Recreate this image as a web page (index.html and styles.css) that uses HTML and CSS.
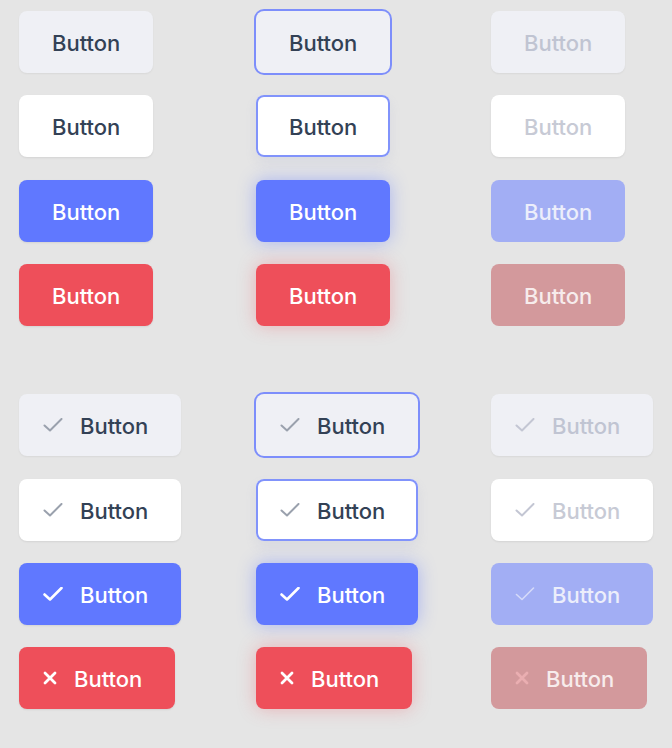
FILE: index.html
```html
<!DOCTYPE html>
<html lang="en">
<head>
  <meta charset="UTF-8" />
  <title>Buttons</title>
  <link rel="stylesheet" href="styles.css">
</head>
<body>
  <div class="page">
    <!-- plain buttons -->
    <div class="grid">
      <div><button class="btn neutral">Button</button></div>
      <div><button class="btn neutral ring">Button</button></div>
      <div><button class="btn neutral off">Button</button></div>

      <div><button class="btn light">Button</button></div>
      <div><button class="btn light edge">Button</button></div>
      <div><button class="btn light off">Button</button></div>

      <div><button class="btn primary">Button</button></div>
      <div><button class="btn primary glow">Button</button></div>
      <div><button class="btn primary off">Button</button></div>

      <div><button class="btn danger">Button</button></div>
      <div><button class="btn danger glow">Button</button></div>
      <div><button class="btn danger off">Button</button></div>
    </div>

    <!-- buttons with icons -->
    <div class="grid">
      <div><button class="btn icon neutral"><svg class="check" viewBox="0 0 20 14"><path d="M1.5 7.5l5.5 5 11.5-11.5"/></svg>Button</button></div>
      <div><button class="btn icon neutral ring"><svg class="check" viewBox="0 0 20 14"><path d="M1.5 7.5l5.5 5 11.5-11.5"/></svg>Button</button></div>
      <div><button class="btn icon neutral off"><svg class="check" viewBox="0 0 20 14"><path d="M1.5 7.5l5.5 5 11.5-11.5"/></svg>Button</button></div>

      <div><button class="btn icon light"><svg class="check" viewBox="0 0 20 14"><path d="M1.5 7.5l5.5 5 11.5-11.5"/></svg>Button</button></div>
      <div><button class="btn icon light edge"><svg class="check" viewBox="0 0 20 14"><path d="M1.5 7.5l5.5 5 11.5-11.5"/></svg>Button</button></div>
      <div><button class="btn icon light off"><svg class="check" viewBox="0 0 20 14"><path d="M1.5 7.5l5.5 5 11.5-11.5"/></svg>Button</button></div>

      <div><button class="btn icon primary"><svg class="check" viewBox="0 0 20 14"><path d="M1.5 7.5l5.5 5 11.5-11.5"/></svg>Button</button></div>
      <div><button class="btn icon primary glow"><svg class="check" viewBox="0 0 20 14"><path d="M1.5 7.5l5.5 5 11.5-11.5"/></svg>Button</button></div>
      <div><button class="btn icon primary off"><svg class="check" viewBox="0 0 20 14"><path d="M1.5 7.5l5.5 5 11.5-11.5"/></svg>Button</button></div>

      <div><button class="btn icon danger"><svg class="cross" viewBox="0 0 14 14"><path d="M2 2l10 10M12 2L2 12"/></svg>Button</button></div>
      <div><button class="btn icon danger glow"><svg class="cross" viewBox="0 0 14 14"><path d="M2 2l10 10M12 2L2 12"/></svg>Button</button></div>
      <div><button class="btn icon danger off"><svg class="cross" viewBox="0 0 14 14"><path d="M2 2l10 10M12 2L2 12"/></svg>Button</button></div>
    </div>
  </div>
</body>
</html>
```

FILE: styles.css
```css
html, body { background: #e5e5e5; }
body { margin: 0; font-family: Inter, "Noto Sans", sans-serif; }
.page { padding: 11px 0 40px 19px; display: flex; flex-direction: column; gap: 68px; }
.grid { display: grid; grid-template-columns: 237px 235px 1fr; row-gap: 22.4px; }

.btn { height: 62px; display: inline-flex; align-items: center; padding: 2px 33px 0; border: 0; border-radius: 8px; font-family: inherit; font-size: 22px; font-weight: 450; cursor: pointer; }
.btn.icon { padding-left: 24px; gap: 17px; }

.btn svg { fill: none; stroke-linecap: round; stroke-linejoin: round; margin-top: -2px; }
.check { width: 20px; height: 14px; stroke-width: 2; }
.cross { width: 14px; height: 14px; stroke-width: 2.6; }

.neutral { background: #eff0f5; color: #334155; box-shadow: 0 1px 2px rgba(0,0,0,0.06); }
.light { background: #fff; color: #334155; box-shadow: 0 1px 2px rgba(0,0,0,0.08); }
.neutral svg, .light svg { stroke: #9aa1ad; }

.primary { background: #6078ff; color: #fff; box-shadow: 0 1px 2px rgba(0,0,0,0.08); }
.danger { background: #ee4f5a; color: #fff; box-shadow: 0 1px 2px rgba(0,0,0,0.08); }
.primary svg, .danger svg { stroke: #fff; stroke-width: 2.6; }
.danger svg.cross { stroke-width: 2.8; }

.ring { box-shadow: 0 0 0 2px #7d8efb; }
.edge { box-shadow: inset 0 0 0 2px #8193fb, 0 6px 12px rgba(130,140,200,0.12); }
.primary.glow { box-shadow: 0 0 18px rgba(96,120,255,0.45); }
.danger.glow { box-shadow: 0 0 18px rgba(238,79,91,0.35); }

.neutral.off { color: #c0c4d2; }
.light.off { color: #c7cad5; }
.neutral.off svg, .light.off svg { stroke: #c3c6d3; }
.primary.off { background: #a2aef4; color: #eceefb; box-shadow: none; }
.primary.off svg { stroke: #d5daf9; stroke-width: 1.6; }
.danger.off { background: #d3999c; color: #f7ecec; box-shadow: none; }
.danger.off svg { stroke: #eaaeb1; }
```
